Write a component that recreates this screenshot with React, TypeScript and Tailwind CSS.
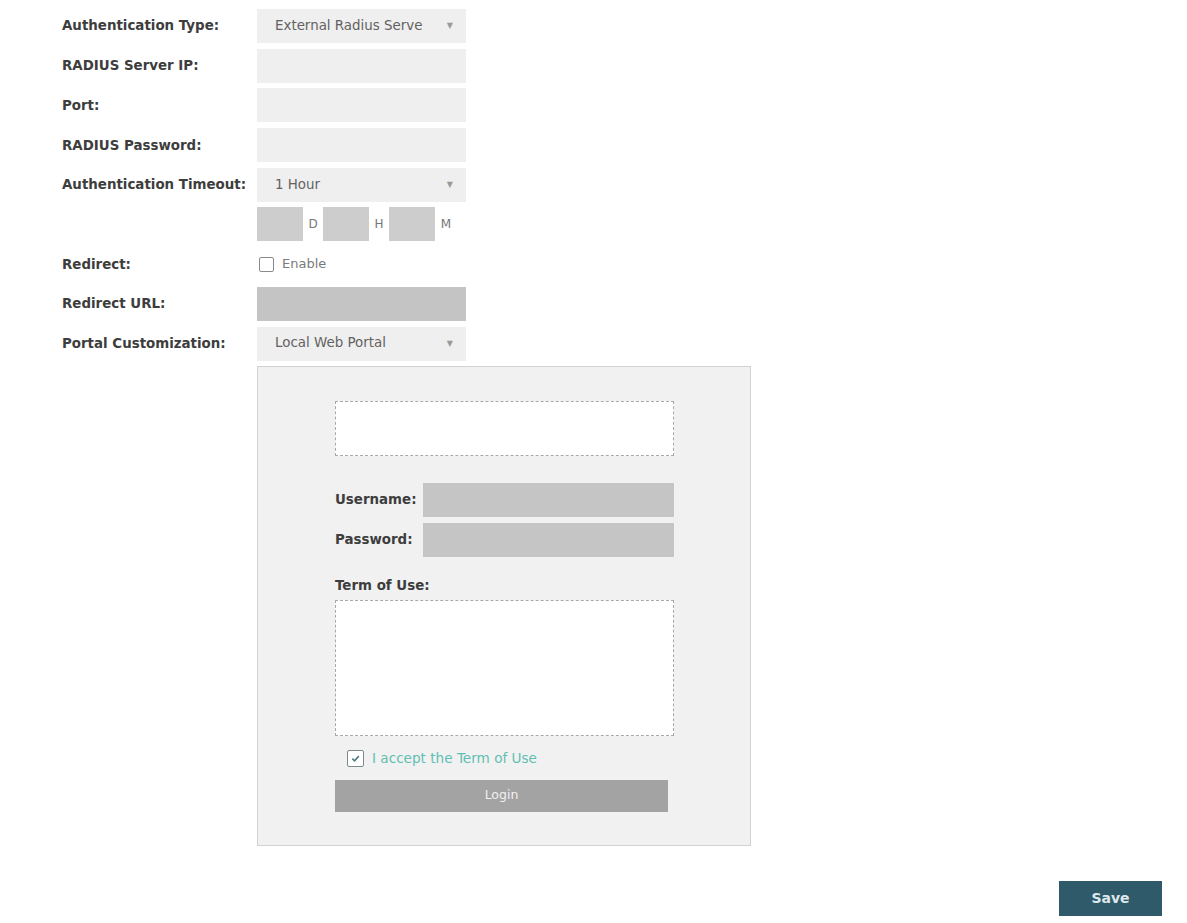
const font = { fontFamily: '"DejaVu Sans", Verdana, sans-serif' }

function Label ({ children }: { children?: React.ReactNode }) {
  return <div className="w-[195px] shrink-0 pt-[1px] text-[13.4px] font-bold text-[#3d3d3d]">{children}</div>
}

function Select ({ value }: { value: string }) {
  return (
    <div className="flex h-[34px] w-[209px] items-center justify-between bg-[#efefef] pl-[18px] pr-[13px] text-[13.4px] text-[#626262]">
      <span className="whitespace-nowrap">{value}</span>
      <span className="text-[8px] text-[#9a9a9a]">▼</span>
    </div>
  )
}

function Row ({ label, children }: { label?: string, children: React.ReactNode }) {
  return (
    <div className="flex items-center">
      <Label>{label}</Label>
      {children}
    </div>
  )
}

function Box ({ tone = 'bg-[#efefef]' }: { tone?: string }) {
  return <div className={`h-[34px] w-[209px] ${tone}`}></div>
}

export default function App () {
  return (
    <main className="relative min-h-[923px] w-full bg-white" style={font}>
      <section className="flex flex-col gap-[5.7px] pl-[62px] pt-[9px]">
        <Row label="Authentication Type:"><Select value="External Radius Serve" /></Row>
        <Row label="RADIUS Server IP:"><Box /></Row>
        <Row label="Port:"><Box /></Row>
        <Row label="RADIUS Password:"><Box /></Row>
        <Row label="Authentication Timeout:"><Select value="1 Hour" /></Row>
        <Row>
          <div className="flex h-[34px] items-center text-[12px] text-[#777]">
            <div className="h-[34px] w-[46px] bg-[#cdcdcd]"></div>
            <span className="w-[20px] text-center">D</span>
            <div className="h-[34px] w-[46px] bg-[#cdcdcd]"></div>
            <span className="w-[20px] text-center">H</span>
            <div className="h-[34px] w-[46px] bg-[#cdcdcd]"></div>
            <span className="w-[22px] text-center">M</span>
          </div>
        </Row>
        <Row label="Redirect:">
          <label className="flex h-[34px] items-center gap-[8px] pl-[2px] text-[13px] text-[#7a7a7a]">
            <span className="h-[15px] w-[15px] rounded-[2px] border border-[#8a8a8a] bg-white"></span>
            Enable
          </label>
        </Row>
        <Row label="Redirect URL:"><Box tone="bg-[#c4c4c4]" /></Row>
        <Row label="Portal Customization:"><Select value="Local Web Portal" /></Row>
        <div className="flex">
          <div className="w-[195px] shrink-0"></div>
          <div className="w-[494px] border border-[#d2d2d2] bg-[#f1f1f1] pb-[33px] pl-[77px] pt-[34px]">
            <div className="w-[339px]">
              <div className="h-[55px] border border-dashed border-[#a8a8a8] bg-white"></div>
              <div className="mt-[27px] flex flex-col gap-[6px]">
                <div className="flex items-center">
                  <span className="w-[88px] text-[13.4px] font-bold text-[#3d3d3d]">Username:</span>
                  <div className="h-[34px] flex-1 bg-[#c5c5c5]"></div>
                </div>
                <div className="flex items-center">
                  <span className="w-[88px] text-[13.4px] font-bold text-[#3d3d3d]">Password:</span>
                  <div className="h-[34px] flex-1 bg-[#c5c5c5]"></div>
                </div>
              </div>
              <div className="mt-[19px] text-[13.4px] font-bold text-[#3d3d3d]">Term of Use:</div>
              <div className="mt-[4px] h-[136px] border border-dashed border-[#a8a8a8] bg-white"></div>
              <div className="mt-[12px] flex items-center gap-[8px] pl-[12px] text-[13.6px] text-[#5fbfb2]">
                <span className="flex h-[17px] w-[17px] items-center justify-center rounded-[2px] border-[1.5px] border-[#7d8a8e] bg-white">
                  <svg viewBox="0 0 12 12" className="h-[11px] w-[11px]">
                    <path d="M2.5 6.2 L5 8.6 L9.6 3.4" fill="none" stroke="#4d7e86" strokeWidth="1.8" />
                  </svg>
                </span>
                I accept the Term of Use
              </div>
              <button className="mt-[11px] flex h-[32px] w-[333px] items-center justify-center bg-[#a3a3a3] text-[12.5px] text-[#f1f1f1]">Login</button>
            </div>
          </div>
        </div>
      </section>
      <button className="absolute left-[1059px] top-[881px] h-[35px] w-[103px] bg-[#2e5a6a] text-[14px] font-bold text-[#dde8ec]">Save</button>
    </main>
  )
}
